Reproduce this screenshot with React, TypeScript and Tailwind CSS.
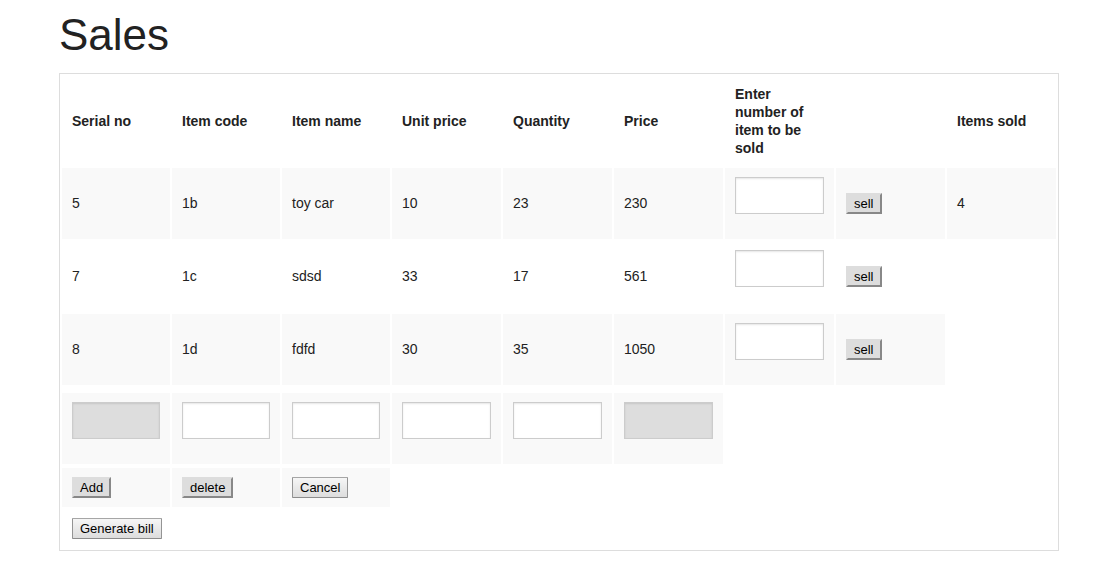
type Item = {
  serial: number;
  code: string;
  name: string;
  unitPrice: number;
  quantity: number;
  price: number;
  sold?: number;
};

const items: Item[] = [
  { serial: 5, code: '1b', name: 'toy car', unitPrice: 10, quantity: 23, price: 230, sold: 4 },
  { serial: 7, code: '1c', name: 'sdsd', unitPrice: 33, quantity: 17, price: 561 },
  { serial: 8, code: '1d', name: 'fdfd', unitPrice: 30, quantity: 35, price: 1050 },
];

const headings = [
  'Serial no',
  'Item code',
  'Item name',
  'Unit price',
  'Quantity',
  'Price',
  'Enter number of item to be sold',
  '',
  'Items sold',
];

const newItemFields = [
  { label: 'Serial no', disabled: true },
  { label: 'Item code', disabled: false },
  { label: 'Item name', disabled: false },
  { label: 'Unit price', disabled: false },
  { label: 'Quantity', disabled: false },
  { label: 'Price', disabled: true },
];

const cell = 'px-[10px] py-[9px] align-middle';
const shaded = 'bg-[#f9f9f9]';

function Field({ label, disabled = false }: { label: string; disabled?: boolean }) {
  return (
    <input
      type="text"
      aria-label={label}
      disabled={disabled}
      className="mb-4 block h-[37px] w-full border border-[#ccc] bg-white p-2 text-sm text-black/75 shadow-[inset_0_1px_2px_rgba(0,0,0,0.1)] disabled:bg-[#ddd]"
    />
  );
}

function FlatButton({ children }: { children: string }) {
  return (
    <button
      type="button"
      className="block border-2 border-t-[#ddd] border-r-[#888] border-b-[#888] border-l-[#ddd] bg-[#ddd] px-[6px] py-px text-[13px] leading-[15px] text-black"
    >
      {children}
    </button>
  );
}

function NativeButton({ children }: { children: string }) {
  return (
    <button
      type="button"
      className="block rounded-[1px] border border-t-[#a6a6a6] border-r-[#949494] border-b-[#8c8c8c] border-l-[#949494] bg-linear-to-b from-[#f6f6f6] to-[#dddddd] px-[7px] py-[2px] text-[13px] leading-[15px] text-black"
    >
      {children}
    </button>
  );
}

export default function App() {
  return (
    <main className="bg-white pt-[4px] pr-[34px] pb-4 pl-[59px] font-['Liberation_Sans',Arial,sans-serif] text-[#222]">
      <h1 className="mb-[7px] text-[44px] leading-[62px]">Sales</h1>
      <table className="w-full table-fixed border-separate border-spacing-[2px] border border-[#ddd] bg-white text-left text-sm">
        <colgroup>
          <col span={3} className="w-[108px]" />
          <col span={6} />
        </colgroup>
        <thead className="leading-[18px]">
          <tr>
            {headings.map((heading, i) => (
              <th key={i} className={`${cell} font-bold`}>
                {heading}
              </th>
            ))}
          </tr>
        </thead>
        <tbody className="leading-[17px]">
          {items.map((item, i) => (
            <tr key={item.serial}>
              {[item.serial, item.code, item.name, item.unitPrice, item.quantity, item.price].map((value, c) => (
                <td key={c} className={`${cell} ${i % 2 === 0 ? shaded : ''}`}>
                  {value}
                </td>
              ))}
              <td className={`${cell} ${i % 2 === 0 ? shaded : ''}`}>
                <Field label={`Number of ${item.name} to be sold`} />
              </td>
              <td className={`${cell} ${i % 2 === 0 ? shaded : ''}`}>
                <FlatButton>sell</FlatButton>
              </td>
              {item.sold !== undefined && <td className={`${cell} ${shaded}`}>{item.sold}</td>}
            </tr>
          ))}
          <tr />
          <tr />
          <tr />
          <tr>
            {newItemFields.map((field) => (
              <td key={field.label} className={`${cell} ${shaded}`}>
                <Field label={field.label} disabled={field.disabled} />
              </td>
            ))}
          </tr>
          <tr />
          <tr>
            <td className={`${cell} ${shaded}`}>
              <FlatButton>Add</FlatButton>
            </td>
            <td className={`${cell} ${shaded}`}>
              <FlatButton>delete</FlatButton>
            </td>
            <td className={`${cell} ${shaded}`}>
              <NativeButton>Cancel</NativeButton>
            </td>
          </tr>
          <tr>
            <td className={`${cell} whitespace-nowrap`}>
              <NativeButton>Generate bill</NativeButton>
            </td>
          </tr>
        </tbody>
      </table>
    </main>
  );
}
